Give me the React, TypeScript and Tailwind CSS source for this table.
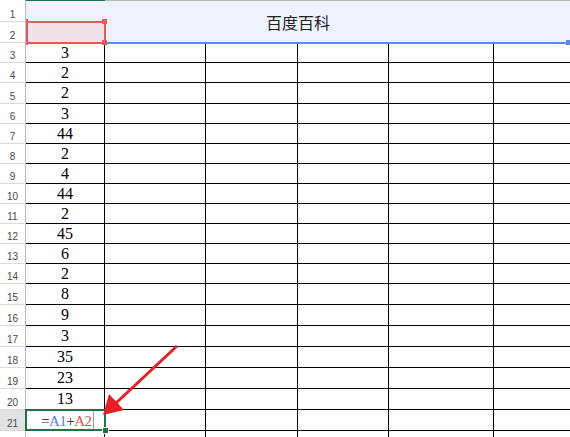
import React from 'react';

const COL_W = ['w-[79px]', 'w-[101px]', 'w-[92px]', 'w-[91px]', 'w-[105px]'];
// heights of rows 3..22
const ROW_H = [20, 20, 21, 20, 20, 20, 20, 20, 20, 20, 20, 20, 21, 21, 21, 21, 21, 21, 21, 21];
const VALUES = ['3', '2', '2', '3', '44', '2', '4', '44', '2', '45', '6', '2', '8', '9', '3', '35', '23', '13'];

const serif = "font-['Liberation_Serif','Times_New_Roman',serif]";

const RowHead: React.FC<{ n: number | null; tall: boolean; active?: boolean }> = ({ n, tall, active }) => (
  <div
    className={`w-[26px] shrink-0 flex items-end justify-center pb-[1px] border-r border-b border-r-[#bcbcbc] border-b-[#d9d9d9] text-[10px] leading-none text-[#4a4a4a] font-['Liberation_Sans',Arial,sans-serif] ${
      tall ? 'h-[21px]' : 'h-[20px]'
    } ${active ? 'bg-[#e2e2e2]' : 'bg-white'}`}
  >
    {n}
  </div>
);

export default function App() {
  return (
    <div className="relative w-[570px] h-[437px] overflow-hidden bg-white">
      {/* column header bottom edge */}
      <div className="flex h-px">
        <div className="w-[26px] shrink-0 border-r border-[#bcbcbc]" />
        <div className="w-[79px] shrink-0 bg-[#217346]" />
        <div className="flex-1 bg-[#b8b8b8]" />
      </div>

      {/* rows 1-2, merged title */}
      <div className="flex">
        <div className="flex flex-col">
          <RowHead n={1} tall />
          <RowHead n={2} tall />
        </div>
        <div className="flex-1 flex items-center justify-center bg-[#eef2fc] border-b border-black text-[16px] text-[#1e1e1e] font-['Noto_Sans_CJK_SC',sans-serif]">
          百度百科
        </div>
      </div>

      {ROW_H.map((h, i) => {
        const row = i + 3;
        const active = row === 21;
        return (
          <div key={row} className={`flex ${h === 21 ? 'h-[21px]' : 'h-[20px]'}`}>
            <RowHead n={row < 22 ? row : null} tall={h === 21} active={active} />
            {COL_W.map((w, c) => (
              <div key={c} className={`${w} shrink-0 border-r border-b border-black`}>
                {c === 0 && VALUES[i] && (
                  <div className={`h-full flex items-center justify-center text-[16px] leading-none text-black ${serif}`}>
                    {VALUES[i]}
                  </div>
                )}
                {c === 0 && active && (
                  <div className={`h-full flex items-end pl-[15px] pb-[1px] text-[15px] leading-none tracking-[-0.5px] text-[#222] ${serif}`}>
                    <span>=</span>
                    <span className="text-[#4f82e3]">A1</span>
                    <span>+</span>
                    <span className="text-[#e2504f]">A2</span>
                    <span className="ml-[1px] w-px h-[18px] bg-[#a0a0a0]" />
                  </div>
                )}
              </div>
            ))}
            <div className="flex-1 border-b border-black" />
          </div>
        );
      })}

      {/* reference highlight A2 (red) */}
      <div className="absolute left-[26px] top-[21px] w-[80px] h-[23px] border-2 border-[#e85a5a] bg-[#efe2ea]" />
      <div className="absolute left-[102px] top-[19px] w-[5px] h-[5px] bg-[#e85a5a]" />
      <div className="absolute left-[102px] top-[40px] w-[5px] h-[5px] bg-[#e85a5a]" />
      <div className="absolute left-[26px] top-[19px] w-[2px] h-[5px] bg-[#e85a5a]" />
      <div className="absolute left-[26px] top-[40px] w-[2px] h-[5px] bg-[#e85a5a]" />

      {/* reference highlight A1 (blue) */}
      <div className="absolute left-[107px] top-[42px] w-[461px] h-[2px] bg-[#5b8ce8]" />
      <div className="absolute left-[566px] top-[40px] w-[5px] h-[5px] bg-[#5b8ce8]" />

      {/* active cell A21 */}
      <div className="absolute left-[25px] top-[409px] w-[81px] h-[22px] border-2 border-[#217346]" />
      <div className="absolute left-[103px] top-[428px] w-[5px] h-[5px] bg-[#217346] outline outline-1 outline-white" />

      {/* annotation arrow */}
      <svg className="absolute inset-0 pointer-events-none" width="570" height="437" viewBox="0 0 570 437">
        <line x1="177" y1="346" x2="115" y2="404" stroke="#e81e25" strokeWidth="3" />
        <polygon points="103,415 124,410 109,394" fill="#e81e25" />
      </svg>
    </div>
  );
}
